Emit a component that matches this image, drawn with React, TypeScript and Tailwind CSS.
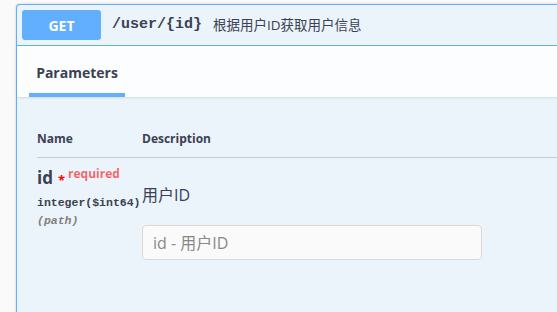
const sans = "font-['Open_Sans','Noto_Sans_CJK_SC',sans-serif]";

export default function App() {
  return (
    <div className={`h-[312px] w-[557px] overflow-hidden bg-[#fafafa] pt-1 pl-4 ${sans}`}>
      <div className="h-[400px] w-[600px] rounded-tl-[4px] border-t border-l border-[#61affe] bg-[#ebf3fb] shadow-[0_0_3px_rgba(0,0,0,0.19)]">
        {/* summary */}
        <div className="flex items-center border-b border-[#61affe] p-[5px]">
          <div className="flex h-[30px] w-[79px] items-center justify-center rounded-[3px] bg-[#61affe] text-[14px] font-bold text-white">
            GET
          </div>
          <span className="ml-[11px] font-['Liberation_Mono',monospace] text-[15px] font-semibold text-[#3b4151]">
            /user/{"{id}"}
          </span>
          <span className="ml-[11px] text-[13.5px] text-[#3b4151]">根据用户ID获取用户信息</span>
        </div>

        {/* tabs */}
        <div className="flex h-[51px] items-end bg-[#fcfdfe] px-3 shadow-[0_1px_2px_rgba(0,0,0,0.1)]">
          <div className="flex w-[96px] flex-col items-center">
            <span className="pb-[10px] text-[14px] leading-5 font-bold text-[#3b4151]">Parameters</span>
            <div className="h-1 w-full bg-[#61affe]" />
          </div>
        </div>

        {/* table */}
        <div className="pl-5 pt-[34px]">
          <div className="flex border-b border-[#c6ccd4] pb-[10px] text-[12px] leading-4 font-bold text-[#3b4151]">
            <div className="w-[105px]">Name</div>
            <div>Description</div>
          </div>
          <div className="flex">
            <div className="w-[105px] pt-[10px] text-[#3b4151]">
              <div className="flex items-start leading-5">
                <span className="text-[17px] font-bold">id</span>
                <span className="ml-[5px] mt-[2px] text-[13px] font-bold text-[#ff0000]">*</span>
                <span className="ml-[3px] -mt-[4px] text-[12px] font-bold text-[rgba(255,0,0,0.6)]">required</span>
              </div>
              <div className="mt-[5px] whitespace-nowrap font-['Liberation_Mono',monospace] text-[11.5px] leading-4 font-bold">
                integer($int64)
              </div>
              <div className="mt-[2px] font-['Liberation_Mono',monospace] text-[11.5px] leading-4 font-bold italic text-[#808080]">
                (path)
              </div>
            </div>
            <div className="pt-[27px]">
              <div className="text-[16px] leading-5 text-[#3b4151]">用户ID</div>
              <input
                className="mt-[20px] h-[35px] w-[340px] rounded-[4px] border border-[#d9d9d9] bg-[#fafafa] px-[10px] text-[16px] text-[#3b4151] outline-none placeholder:text-[#888]"
                placeholder="id - 用户ID"
              />
            </div>
          </div>
        </div>
      </div>
    </div>
  );
}
